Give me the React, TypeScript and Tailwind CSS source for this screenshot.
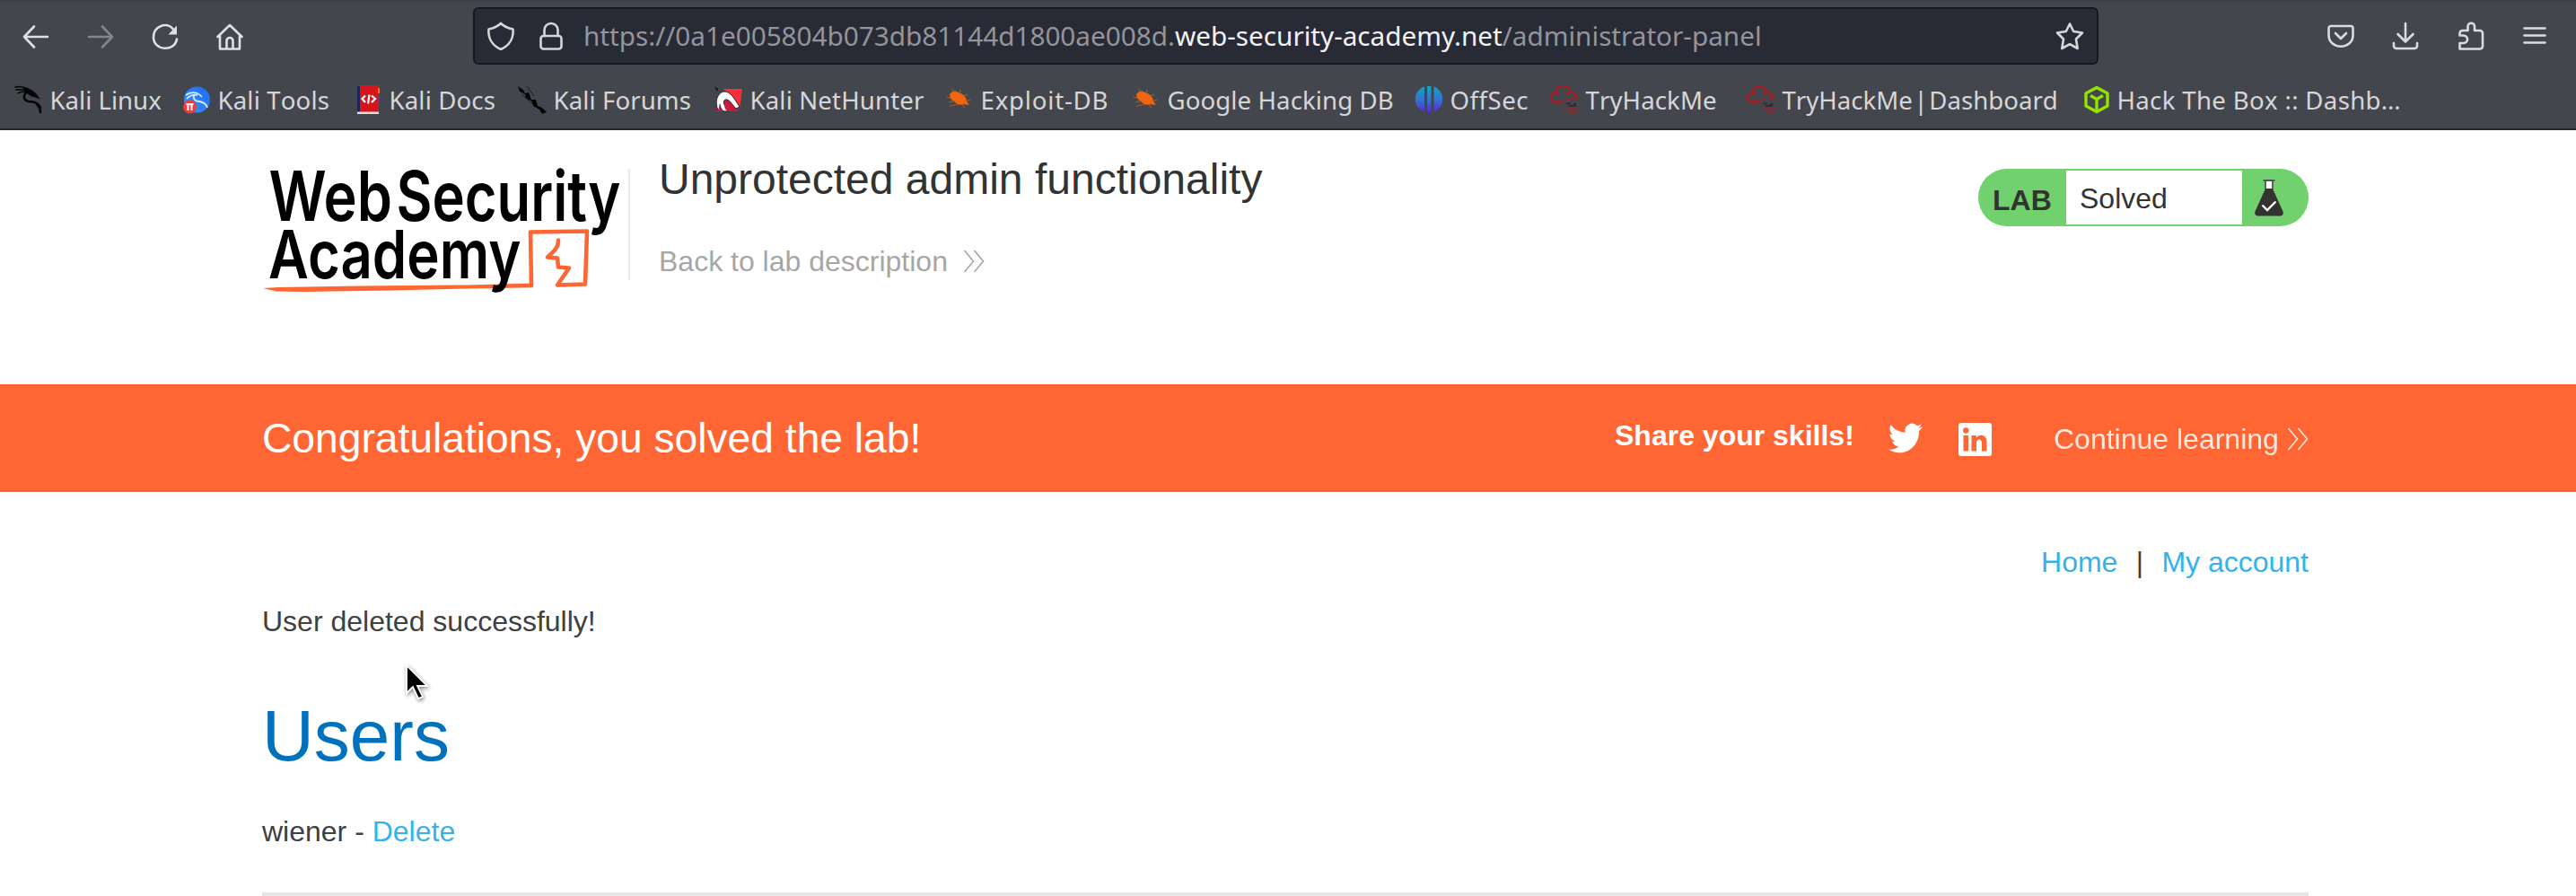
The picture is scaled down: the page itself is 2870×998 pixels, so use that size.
import React from "react";

const stroke = {
  fill: "none",
  stroke: "currentColor",
  strokeWidth: 2.6,
  strokeLinecap: "round" as const,
  strokeLinejoin: "round" as const,
};

function ToolIcon({ children, className = "" }: { children: React.ReactNode; className?: string }) {
  return (
    <svg viewBox="0 0 32 32" className={`size-8 shrink-0 ${className}`} {...stroke}>
      {children}
    </svg>
  );
}

function DragonIcon() {
  return (
    <svg viewBox="0 0 32 32" className="size-8 shrink-0" fill="none" stroke="#050505" strokeLinecap="round">
      <path d="M1 2c5-1 10 0 14 2M2 5c5-1 9 0 13 2M4 9c3-2 6-2 9-1" strokeWidth="1.5" />
      <path d="M10 3c7 0 13 4 16 9l2 3-5-2c-4 0-7-3-12-7z" fill="#050505" strokeWidth="0.600" />
      <path d="M13 8c-4 5-2 9 3 10 7 0 11 2 13 7" strokeWidth="2.600" />
      <path d="M25 21c3 3 4 6 4 9" strokeWidth="2.600" />
    </svg>
  );
}

function KaliToolsIcon() {
  return (
    <svg viewBox="0 0 32 32" className="size-8 shrink-0" fill="none">
      <defs>
        <linearGradient id="kt" x1="0" y1="1" x2="1" y2="0">
          <stop offset="0" stopColor="#2f9bff" />
          <stop offset="1" stopColor="#2266f5" />
        </linearGradient>
      </defs>
      <circle cx="16.500" cy="16" r="14.500" fill="url(#kt)" />
      <path d="M4 11c7-5 14-3 18 2M5 15c4-4 8-5 12-4" stroke="#dbe9ff" strokeWidth="1.600" />
      <path d="M14 10c-3 4 0 8 5 8 5 1 8 3 9 7" stroke="#dbe9ff" strokeWidth="1.800" />
      <circle cx="8.500" cy="24" r="7.500" fill="#f03a3e" />
      <path d="M4.500 21h8M6.500 21v7M10.500 21v7" stroke="#fff" strokeWidth="2" />
    </svg>
  );
}

function KaliDocsIcon() {
  return (
    <svg viewBox="0 0 32 32" className="size-8 shrink-0">
      <path d="M4 1h5v29H4z" fill="#1d2557" />
      <path d="M7 0h21v30H7z" fill="#d5151b" />
      <path d="M27 3h2v6h-2z" fill="#e87d24" />
      <path d="M27 12h2v6h-2z" fill="#4b3f9a" />
      <path d="M4 29.500h24V32H4z" fill="#e4dcdc" />
      <path d="M13 11.500l-3.500 3.500 3.500 4M17.500 10.500l-1.500 10M20 11.500l4 3.500-4 4" fill="none" stroke="#fff" strokeWidth="2.200" />
    </svg>
  );
}

function KaliForumsIcon() {
  return (
    <svg viewBox="0 0 32 32" className="size-8 shrink-0">
      <path d="M0 1l6 4 2 4 4-1 3 8 5 0 2 7 5 2 5 5-5 2-3-5-7-4-2-6-6-2-1-5-6-3z" fill="#050505" />
      <path d="M10 1l8 11M4 10l12 10" stroke="#1c1c20" strokeWidth="1" />
    </svg>
  );
}

function NetHunterIcon() {
  return (
    <svg viewBox="0 0 32 32" className="size-8 shrink-0">
      <path d="M10 4h21l-3 22z" fill="#fb2f37" />
      <path d="M1 17l6-9 16 8 4 13H2z" fill="#c51a3c" />
      <path d="M0 1l4 3-1 3z" fill="#111" />
      <path d="M4 28C0 18 3 9 10 7c8-1 12 8 18 17l-4 2c-5-5-7-11-12-10-4 2 0 8 4 13h-6c-2-2-4-5-4-8" fill="#fff" stroke="#22222a" strokeWidth="1" />
      <path d="M13 20c4 3 6 6 7 9h-6c-3-4-4-7-1-9z" fill="#d01c3d" />
    </svg>
  );
}

function ExploitIcon() {
  return (
    <svg viewBox="-1 -1 34 34" className="size-8 shrink-0" fill="#f0660f" stroke="#f0660f">
      <path d="M5 9c3-3 6-3.500 8-2l5 2c4 2 6 5 6 8l3 5-6-1c-4 2-8 0-11-3-4-2-6-5-5-9z" strokeWidth="0.500" />
      <path d="M9 7L7 3M16 8l1-4M21 11l5-1M5 14l-4-1M9 18l-6 1M15 21l-11 3M19 21l3 5M25 17l4 0" strokeWidth="0.900" opacity="0.800" />
    </svg>
  );
}

function OffSecIcon() {
  return (
    <svg viewBox="0 0 32 32" className="size-8 shrink-0">
      <defs>
        <linearGradient id="os" gradientUnits="userSpaceOnUse" x1="0" y1="1" x2="0" y2="32">
          <stop offset="0" stopColor="#12a5bd" />
          <stop offset="0.500" stopColor="#3472d2" />
          <stop offset="1" stopColor="#5a1fd0" />
        </linearGradient>
      </defs>
      <g fill="url(#os)">
        <path d="M11 1.500C4 4 .8 9.500.8 16S4 26.500 11 29.500z" />
        <path d="M14 1h4.500v28l-2.200 3-2.300-3z" />
        <path d="M21.500 1.500C28 4 31.200 9.500 31.200 16S28 26.500 21.500 29.500z" />
      </g>
    </svg>
  );
}

function TryHackMeIcon() {
  return (
    <svg viewBox="0 0 32 32" className="size-8 shrink-0" fill="none">
      <path d="M15 18.500H5.500C-1 17-.5 9.500 6 9 6-1 21-2 22 7.500c5 0 8 3.500 8 8M9 10c0-2-1.500-2.500-3-2M22 8c-1.500 0-2.500 1-2.500 2.500" stroke="#a51e23" strokeWidth="2.400" />
      <path d="M18 15.500h4M25 14.500h5M19 26h6M21 30.500h3M27 27l4-1M25 31l4-2" stroke="#a51e23" strokeWidth="2.200" />
      <path d="M18 20.500h5M26 21h3M21 23h8" stroke="#2c2d36" strokeWidth="2" />
    </svg>
  );
}

function HtbIcon() {
  return (
    <svg viewBox="0 0 32 32" className="size-8 shrink-0" fill="none" stroke="#94e300" strokeWidth="3.400" strokeLinejoin="round">
      <path d="M17 2.500L29 9v14l-12 6.500L5 23V9z" />
      <path d="M10 11.500l7 4 7-4M17 15.500V28" />
    </svg>
  );
}

const bookmarks = [
  { label: "Kali Linux", icon: <DragonIcon />, cls: "w-[187px]" },
  { label: "Kali Tools", icon: <KaliToolsIcon />, cls: "w-[191px] tracking-[0.15px]" },
  { label: "Kali Docs", icon: <KaliDocsIcon />, cls: "w-[183px] tracking-[0.15px]" },
  { label: "Kali Forums", icon: <KaliForumsIcon />, cls: "w-[219px] tracking-[0.1px]" },
  { label: "Kali NetHunter", icon: <NetHunterIcon />, cls: "w-[257px] tracking-[0.15px]" },
  { label: "Exploit-DB", icon: <ExploitIcon />, cls: "w-[208px] tracking-[0.8px]" },
  { label: "Google Hacking DB", icon: <ExploitIcon />, cls: "w-[315px] tracking-[0.1px]" },
  { label: "OffSec", icon: <OffSecIcon />, cls: "w-[151px] tracking-[0.5px]" },
  { label: "TryHackMe", icon: <TryHackMeIcon />, cls: "w-[219px] tracking-[0.1px]" },
  { label: "TryHackMe | Dashboard", icon: <TryHackMeIcon />, cls: "w-[373px] [word-spacing:-5.500px]" },
  { label: "Hack The Box :: Dashb…", icon: <HtbIcon />, cls: "w-[380px] tracking-[0.33px]" },
];

function BrowserChrome() {
  return (
    <div className="h-[145px] border-t-2 border-[#3b3d47] bg-[#44464d] font-['Noto_Sans',sans-serif] text-[#d6d6d8]">
      <div className="flex h-[78px] items-center">
        <div className="-mt-0.5 flex w-[527px] items-center gap-10 pl-6 text-[#e0e0e0]">
          <ToolIcon>
            <path d="M29 17H3M14 5.500L3 17l11 11.500" />
          </ToolIcon>
          <ToolIcon className="text-[#85868b]">
            <path d="M3 17h26M18 5.500L29 17 18 28.500" />
          </ToolIcon>
          <ToolIcon>
            <path d="M25 8.500C18-.5 3 5 3 17.500 3 33 27 34 29 19.500" />
            <path d="M29 4.500v10H19.500z" fill="currentColor" stroke="none" />
          </ToolIcon>
          <ToolIcon>
            <path d="M2.500 17L16 4l13.500 13M5 15v15.500h22V15M12.500 30v-8.500a3.500 3.500 0 0 1 7 0V30" />
          </ToolIcon>
        </div>
        <div className="-mt-0.5 flex h-16 w-[1811px] items-center rounded-md border-2 border-[#17181d] bg-[#282a36] pl-[13px] pr-[14px]">
          <ToolIcon>
            <path d="M16 2c4 4 8 5.500 13.500 6.500C30.500 19 25 27 16 31 7 27 1.500 19 2.500 8.500 8 7.500 12 6 16 2z" />
          </ToolIcon>
          <ToolIcon className="ml-6">
            <rect x="4.500" y="16" width="23" height="14.500" rx="3" />
            <path d="M8.500 16V9.500a7.500 7.500 0 0 1 15 0V16" />
          </ToolIcon>
          <div className="ml-5 flex-1 whitespace-nowrap text-[29.7px] leading-[60px] text-[#94959b]">
            https://0a1e005804b073db81144d1800ae008d.
            <span className="text-[#f2f2f4]">web-security-academy.net</span>
            /administrator-panel
          </div>
          <ToolIcon>
            <path d="M16 2.500l4.200 8.500 9.800 1.500-7 7 1.700 10.500L16 25.200 7.300 30 9 19.500l-7-7 9.800-1.500z" />
          </ToolIcon>
        </div>
        <div className="-mt-0.5 flex items-center pl-[254px] text-[#dcdcde]">
          <ToolIcon>
            <path d="M5 5h22a2.500 2.500 0 0 1 2.500 2.500V15c0 17-27 17-27 0V7.500A2.500 2.500 0 0 1 5 5zM10 13l6 6 6-6" />
          </ToolIcon>
          <ToolIcon className="ml-10">
            <path d="M16 2v20M7.500 14l8.500 8.500 8.500-8.500M3 24v3a3 3 0 0 0 3 3h20a3 3 0 0 0 3-3v-3" />
          </ToolIcon>
          <ToolIcon className="ml-[41px]">
            <path d="M3.500 30.500V24h4c6 0 6-8.500 0-8.500h-4V13a3 3 0 0 1 3-3h6V5.500c0-5 7.500-5 7.500 0V10H26a3 3 0 0 1 3 3v14.500a3 3 0 0 1-3 3z" />
          </ToolIcon>
          <ToolIcon className="ml-[39px]">
            <path d="M4.500 7.500h23M4.500 15.500h23M4.500 23.500h23" />
          </ToolIcon>
        </div>
      </div>
      <div className="flex h-[65px] items-center border-b-2 border-[#25262c] pb-0.5 pl-4 text-[27.6px] leading-9 [font-kerning:none]">
        {bookmarks.map((b) => (
          <div key={b.label} className={`flex shrink-0 items-center gap-[7.500px] whitespace-nowrap ${b.cls}`}>
            {b.icon}
            <span>{b.label}</span>
          </div>
        ))}
      </div>
    </div>
  );
}

function AcademyLogo() {
  return (
    <svg viewBox="292 170 402 170" className="mt-[25px] h-[170px] w-[402px] shrink-0">
      <g fill="none" stroke="#ff6633" strokeLinejoin="round" strokeLinecap="round">
        <path d="M592 318l-1-59.500 63-1-2 59-31 1 13-19-12-1-1-10-11-1c10-9 12-12 12-19" strokeWidth="4.600" />
      </g>
      <path d="M293 321l17-1 90-1.500 120-1 73-2v4.800l-70 1.200-90 2-95 1.500-30-.5z" fill="#ff6633" />
      <g fill="#000" className="font-['Inter',sans-serif] font-semibold" fontSize="76.500">
        <text x="299.500" y="245.500" textLength="137.500" lengthAdjust="spacingAndGlyphs">Web</text>
        <text x="441.500" y="245.500" textLength="250" lengthAdjust="spacingAndGlyphs">Security</text>
        <text x="299" y="310" fontSize="74.500" textLength="281.500" lengthAdjust="spacingAndGlyphs">Academy</text>
      </g>
    </svg>
  );
}

function DoubleChevron({ className }: { className: string }) {
  return (
    <svg viewBox="0 0 24 26" className={`h-[26px] w-6 shrink-0 ${className}`} fill="none" stroke="currentColor" strokeWidth="1.600">
      <path d="M1.500 1l10 12-10 12M12.500 1l10 12-10 12" />
    </svg>
  );
}

function LabStatus() {
  return (
    <div className="mt-[43px] flex h-16 w-[368px] overflow-hidden rounded-full bg-[#70d16e] text-[32px] leading-10 text-[#333332]">
      <div className="w-[98px] pl-4 pt-[15px] font-bold">LAB</div>
      <div className="my-0.5 w-[196px] bg-white pl-[15px] pt-[11px]">Solved</div>
      <svg viewBox="0 0 34 42" className="ml-[13px] mt-[11px] h-[42px] w-[34px]">
        <path d="M13.500 3h7v8h-7z" fill="#fff" />
        <path d="M10.500 2h13M13 2.500v9M21 2.500v9" stroke="#555" strokeWidth="1.800" fill="none" />
        <path d="M13 11h8l11.500 25.500c1 3-.5 5-3 5h-25c-2.500 0-4-2-3-5z" fill="#333332" />
        <path d="M9.500 29.500l5.500 5.500 9.500-9.500" stroke="#fff" strokeWidth="2.400" fill="none" />
      </svg>
    </div>
  );
}

function LabHeader() {
  return (
    <header className="flex h-[283px] pl-[292px] pr-[298px] text-[#333332]">
      <AcademyLogo />
      <div className="ml-1.5 mt-[43px] h-[124px] w-0.5 bg-[#e9e9e9]" />
      <div className="ml-8 mt-[27px] flex-1">
        <h2 className="text-[48px] leading-[56px]">Unprotected admin functionality</h2>
        <a className="mt-[43px] flex items-center text-[32px] leading-10 text-[#a6a6a6]">
          Back to lab description
          <DoubleChevron className="ml-[17px]" />
        </a>
      </div>
      <LabStatus />
    </header>
  );
}

function SolvedBanner() {
  return (
    <section className="flex h-[120px] items-center bg-[#ff6633] pl-[292px] text-[32px] leading-10 text-white">
      <h4 className="w-[1507px] text-[46.2px] leading-[54px]">Congratulations, you solved the lab!</h4>
      <span className="-mt-1.5 w-[305px] font-bold">Share your skills!</span>
      <svg viewBox="0 0 24 24" className="h-[40px] w-[38px]" fill="#fff" preserveAspectRatio="none">
        <path d="M23.950 4.570a10 10 0 0 1-2.820.77 4.960 4.960 0 0 0 2.160-2.720c-.950.550-2 .950-3.130 1.180a4.920 4.920 0 0 0-8.380 4.480A13.930 13.930 0 0 1 1.640 3.160a4.920 4.920 0 0 0 1.520 6.570 4.900 4.900 0 0 1-2.230-.610v.060a4.920 4.920 0 0 0 3.950 4.830 5 5 0 0 1-2.210.080 4.940 4.940 0 0 0 4.600 3.420A9.870 9.870 0 0 1 0 19.540a13.990 13.990 0 0 0 7.550 2.210c9.050 0 14-7.500 14-13.980 0-.210 0-.420-.020-.630a9.940 9.940 0 0 0 2.460-2.550z" />
      </svg>
      <svg viewBox="0 0 37 37" className="ml-10 mt-0.5 size-[37px]">
        <rect width="37" height="37" rx="3" fill="#fff" />
        <g fill="#ff6633">
          <circle cx="8.300" cy="8.500" r="3.200" />
          <path d="M5.500 14H11v17.500H5.500zM14.500 14h5.300v2.400c3-4.300 11.700-3.700 11.700 4.600v10.500H26v-9.300c0-5-6-4.600-6 0v9.300h-5.500z" />
        </g>
      </svg>
      <a className="ml-[69px] mt-px flex items-center opacity-85">
        Continue learning
        <DoubleChevron className="ml-[9px]" />
      </a>
    </section>
  );
}

export default function App() {
  return (
    <div className="relative h-[998px] w-[2870px] overflow-hidden bg-white font-['Liberation_Sans',Arial,sans-serif]">
      <BrowserChrome />
      <LabHeader />
      <SolvedBanner />
      <main className="pl-[292px] pr-[298px] pt-[58px] text-[32px] leading-10 text-[#404040]">
        <nav className="flex justify-end text-[#36b1e9]">
          <a>Home</a>
          <span className="w-[49px] text-center text-[#404040]">|</span>
          <a>My account</a>
        </nav>
        <p className="mt-[26px]">User deleted successfully!</p>
        <h1 className="mt-[62px] text-[80px] leading-[92px] text-[#0071bc]">Users</h1>
        <div className="mt-10">
          wiener - <a className="text-[#36b1e9]">Delete</a>
        </div>
        <hr className="mt-12 border-t-4 border-[#e5e5e5]" />
      </main>
      <svg viewBox="0 0 30 44" className="absolute left-[450px] top-[739px] h-[44px] w-[30px] drop-shadow-[1px_2px_2px_rgba(0,0,0,0.45)]">
        <path d="M3 2v31l7-7 6 13 5-2-6-12h11z" fill="#000" stroke="#fff" strokeWidth="1.800" />
      </svg>
    </div>
  );
}
